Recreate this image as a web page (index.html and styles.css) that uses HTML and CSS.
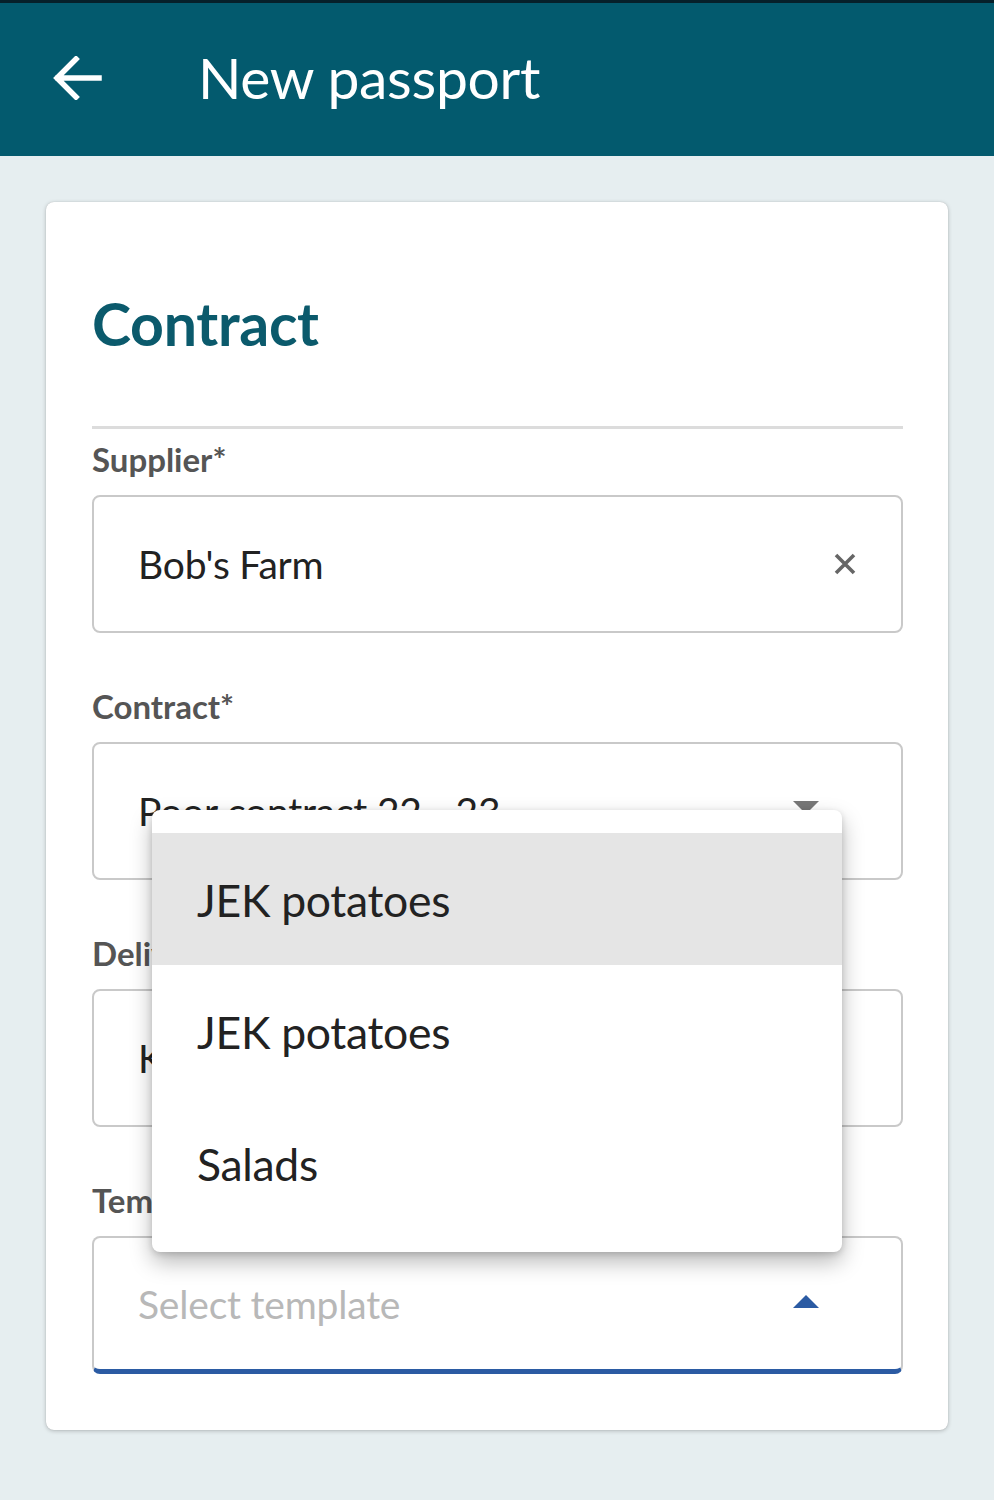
FILE: index.html
```html
<!DOCTYPE html>
<html lang="en">
<head>
<meta charset="utf-8">
<title>New passport</title>
<link rel="stylesheet" href="styles.css">
</head>
<body>
<header class="appbar">
  <svg class="back" viewBox="0 0 50 44" width="50" height="44" aria-hidden="true">
    <path d="M47 22H6M24 3L5 22l19 19" fill="none" stroke="#fff" stroke-width="5.5" stroke-linecap="square"/>
  </svg>
  <h1 class="title">New passport</h1>
</header>
<main class="page">
  <section class="card">
    <h2 class="heading">Contract</h2>
    <hr class="divider">
    <div class="field">
      <label class="label">Supplier*</label>
      <div class="input">
        <span class="value">Bob's Farm</span>
        <svg class="clear" viewBox="0 0 24 24" width="24" height="24" aria-hidden="true">
          <path d="M3 3L21 21M21 3L3 21" stroke="#666" stroke-width="3.6" stroke-linecap="butt"/>
        </svg>
      </div>
    </div>
    <div class="field">
      <label class="label">Contract*</label>
      <div class="input">
        <span class="value">Poor contract 22 - 23</span>
        <span class="caret caret-down"></span>
      </div>
    </div>
    <div class="field">
      <label class="label">Delivery*</label>
      <div class="input">
        <span class="value">K</span>
      </div>
    </div>
    <div class="field">
      <label class="label">Template*</label>
      <div class="input input-active">
        <span class="value placeholder">Select template</span>
        <span class="caret caret-up"></span>
      </div>
    </div>
    <ul class="menu">
      <li class="menu-item menu-item-hover">JEK potatoes</li>
      <li class="menu-item">JEK potatoes</li>
      <li class="menu-item">Salads</li>
    </ul>
  </section>
</main>
</body>
</html>
```

FILE: styles.css
```css
* { box-sizing: border-box; }
html, body {
  margin: 0;
  padding: 0;
}
body {
  background: #e6eef0;
  font-family: Lato, "Noto Sans", sans-serif;
  width: 994px;
  min-height: 1500px;
}
.appbar {
  height: 156px;
  background: #035a6e;
  border-top: 3px solid #06202a;
  display: flex;
  align-items: center;
  padding-left: 52px;
}
.back {
  display: block;
  margin-top: -3px;
}
.title {
  margin: 0 0 0 96px;
  color: #fff;
  font-weight: 400;
  font-size: 57px;
  line-height: 1;
  letter-spacing: -0.3px;
  margin-top: -4px;
}
.page {
  padding: 46px 46px 70px 46px;
}
.card {
  position: relative;
  background: #fff;
  border-radius: 8px;
  box-shadow: 0 1px 4px rgba(0,0,0,0.22), 0 0 1px rgba(0,0,0,0.2);
  padding: 86px 45px 56px 46px;
  width: 902px;
  height: 1228px;
}
.heading {
  margin: 0;
  font-size: 59px;
  line-height: 72px;
  font-weight: 700;
  color: #0b5a6c;
  letter-spacing: -0.3px;
}
.divider {
  margin: 66px 0 0 0;
  border: 0;
  height: 3px;
  background: #dcdcdc;
}
.field {
  display: flex;
  flex-direction: column;
  margin-top: 53px;
}
.field:first-of-type { margin-top: 10px; }
.label {
  font-size: 33px;
  line-height: 40px;
  font-weight: 700;
  color: #555;
  margin-bottom: 16px;
}
.input {
  height: 138px;
  border: 2px solid #c9c9c9;
  border-radius: 8px;
  display: flex;
  align-items: center;
  padding: 0 82px 0 44px;
  justify-content: space-between;
}
.value {
  font-size: 39px;
  color: #222;
  letter-spacing: -0.2px;
}
.placeholder { color: #b8b8b8; }
.clear { display: block; margin-right: -38px; }
.caret {
  width: 0;
  height: 0;
  border-left: 13px solid transparent;
  border-right: 13px solid transparent;
  margin-right: 0;
}
.caret-down { border-top: 13px solid #777; margin-top: -8px; }
.caret-up { border-bottom: 13px solid #2b5ba3; margin-top: -4px; }
.input-active {
  border-bottom: 5px solid #2b5ba3;
}
.menu {
  position: absolute;
  left: 106px;
  top: 608px;
  width: 690px;
  margin: 0;
  padding: 23px 0;
  list-style: none;
  background: #fff;
  border-radius: 8px;
  box-shadow: 0 10px 22px rgba(0,0,0,0.28), 0 2px 6px rgba(0,0,0,0.15);
}
.menu-item {
  height: 132px;
  display: flex;
  align-items: center;
  padding-left: 45px;
  font-size: 44.5px;
  color: #222;
  letter-spacing: -0.3px;
}
.menu-item-hover { background: #e5e5e5; }
```
